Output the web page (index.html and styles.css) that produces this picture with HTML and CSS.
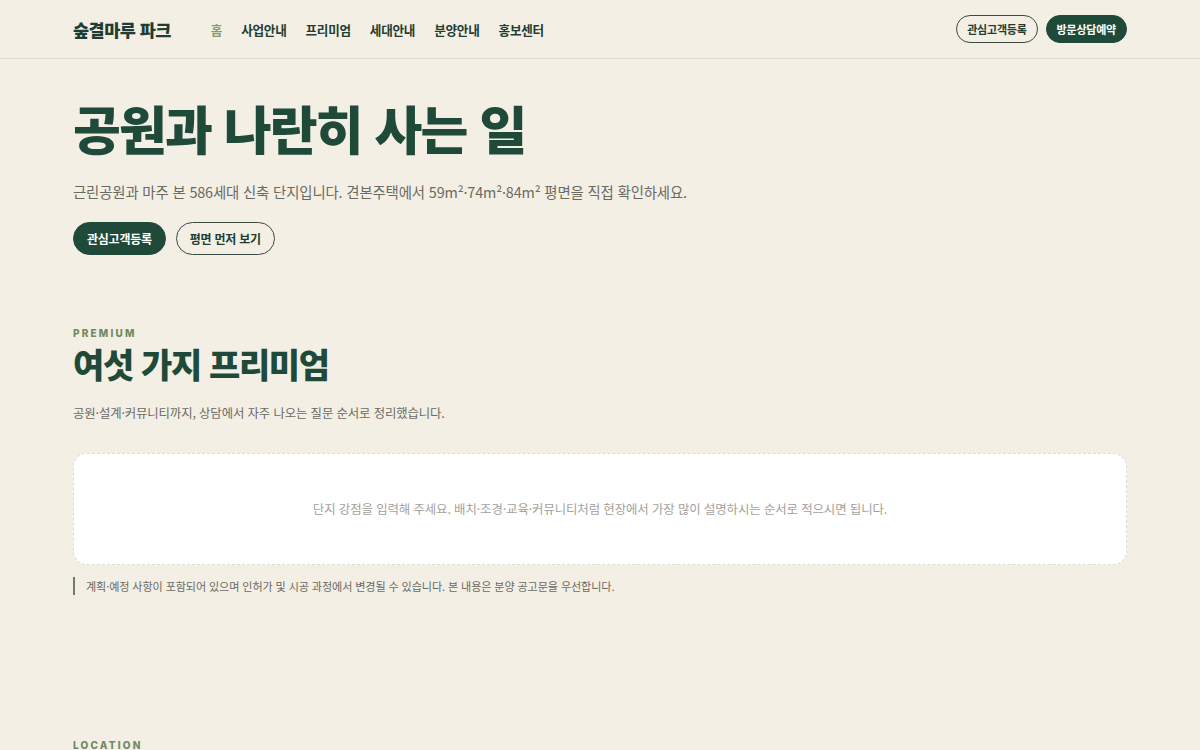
FILE: index.html
```html
<!DOCTYPE html>
<html lang="ko">
<head>
<meta charset="utf-8">
<title>숲결마루 파크</title>
<link rel="stylesheet" href="styles.css">
</head>
<body>
<header class="site-header">
  <div class="container header-inner">
    <div class="header-left">
      <a class="logo" href="#">숲결마루 파크</a>
      <nav class="nav">
        <a class="nav-link active" href="#">홈</a>
        <a class="nav-link" href="#">사업안내</a>
        <a class="nav-link" href="#">프리미엄</a>
        <a class="nav-link" href="#">세대안내</a>
        <a class="nav-link" href="#">분양안내</a>
        <a class="nav-link" href="#">홍보센터</a>
      </nav>
    </div>
    <div class="header-actions">
      <a class="btn btn-sm btn-outline" href="#">관심고객등록</a>
      <a class="btn btn-sm btn-solid" href="#">방문상담예약</a>
    </div>
  </div>
</header>

<main>
  <section class="hero">
    <div class="container">
      <h1 class="hero-title">공원과 나란히 사는 일</h1>
      <p class="hero-lead">근린공원과 마주 본 586세대 신축 단지입니다. 견본주택에서 59m²·74m²·84m² 평면을 직접 확인하세요.</p>
      <div class="hero-actions">
        <a class="btn btn-md btn-solid" href="#">관심고객등록</a>
        <a class="btn btn-md btn-outline" href="#">평면 먼저 보기</a>
      </div>
    </div>
  </section>

  <section class="section">
    <div class="container">
      <p class="eyebrow">PREMIUM</p>
      <h2 class="section-title">여섯 가지 프리미엄</h2>
      <p class="section-desc">공원·설계·커뮤니티까지, 상담에서 자주 나오는 질문 순서로 정리했습니다.</p>
      <div class="placeholder">단지 강점을 입력해 주세요. 배치·조경·교육·커뮤니티처럼 현장에서 가장 많이 설명하시는 순서로 적으시면 됩니다.</div>
      <p class="note">계획·예정 사항이 포함되어 있으며 인허가 및 시공 과정에서 변경될 수 있습니다. 본 내용은 분양 공고문을 우선합니다.</p>
    </div>
  </section>

  <section class="section section-location">
    <div class="container">
      <p class="eyebrow">LOCATION</p>
    </div>
  </section>
</main>
</body>
</html>
```

FILE: styles.css
```css
* { box-sizing: border-box; }
html, body { margin: 0; padding: 0; }
body {
  background: #f3efe5;
  color: #1f4a3a;
  font-family: "Noto Sans CJK KR", "Noto Sans", sans-serif;
  -webkit-font-smoothing: antialiased;
}
a { text-decoration: none; color: inherit; }
p, h1, h2 { margin: 0; }

.container {
  padding: 0 73px;
}

.site-header {
  border-bottom: 1px solid #e2ddd1;
}
.header-inner {
  height: 58px;
  display: flex;
  align-items: center;
  justify-content: space-between;
}
.header-left {
  display: flex;
  align-items: center;
}
.logo {
  font-size: 17.5px;
  font-weight: 800;
  letter-spacing: -0.03em;
  color: #1f3d31;
  margin-right: 40px;
}
.nav {
  display: flex;
  gap: 19px;
}
.nav-link {
  font-size: 12.6px;
  font-weight: 700;
  color: #1f3d31;
  letter-spacing: -0.02em;
}
.nav-link.active { color: #7f9d70; }

.header-actions {
  display: flex;
  gap: 8px;
}

.btn {
  display: inline-flex;
  align-items: center;
  justify-content: center;
  border-radius: 999px;
  font-weight: 700;
  letter-spacing: -0.02em;
  border: 1px solid #1f4a3a;
}
.btn-sm {
  height: 28px;
  padding: 0 10px;
  font-size: 11px;
}
.btn-md {
  height: 33px;
  padding: 0 13px;
  font-size: 12px;
}
.btn-solid {
  background: #1f4a3a;
  color: #fff;
}
.btn-outline {
  background: transparent;
  color: #1f3d31;
  border-color: #3a4a40;
}

.hero {
  padding: 33px 0 0;
}
.hero-title {
  font-size: 52px;
  line-height: 72px;
  font-weight: 800;
  letter-spacing: -0.035em;
  color: #1f4a3a;
}
.hero-lead {
  margin-top: 16px;
  font-size: 14.4px;
  line-height: 24px;
  color: #6b6a62;
  letter-spacing: -0.01em;
}
.hero-actions {
  margin-top: 18px;
  display: flex;
  gap: 10px;
}

.section {
  padding-top: 71px;
}
.eyebrow {
  font-family: "Inter", "Noto Sans", sans-serif;
  font-size: 10px;
  font-weight: 800;
  letter-spacing: 0.22em;
  color: #6f8b62;
  line-height: 14px;
}
.section-title {
  margin-top: 2px;
  font-size: 34px;
  line-height: 44px;
  font-weight: 800;
  letter-spacing: -0.04em;
  color: #1f4a3a;
}
.section-desc {
  margin-top: 17px;
  font-size: 12.4px;
  line-height: 20px;
  color: #6b6a62;
  letter-spacing: -0.01em;
}
.placeholder {
  margin-top: 30px;
  height: 112px;
  background: #fff;
  border: 1px dashed #dedbd3;
  border-radius: 14px;
  display: flex;
  align-items: center;
  justify-content: center;
  font-size: 12.45px;
  color: #a3a19b;
  letter-spacing: -0.01em;
}
.note {
  margin-top: 12px;
  border-left: 2px solid #6f7d62;
  padding-left: 11px;
  font-size: 11.1px;
  line-height: 18px;
  color: #6b6a62;
  letter-spacing: -0.01em;
}

.section-location {
  padding-top: 143px;
}
```
